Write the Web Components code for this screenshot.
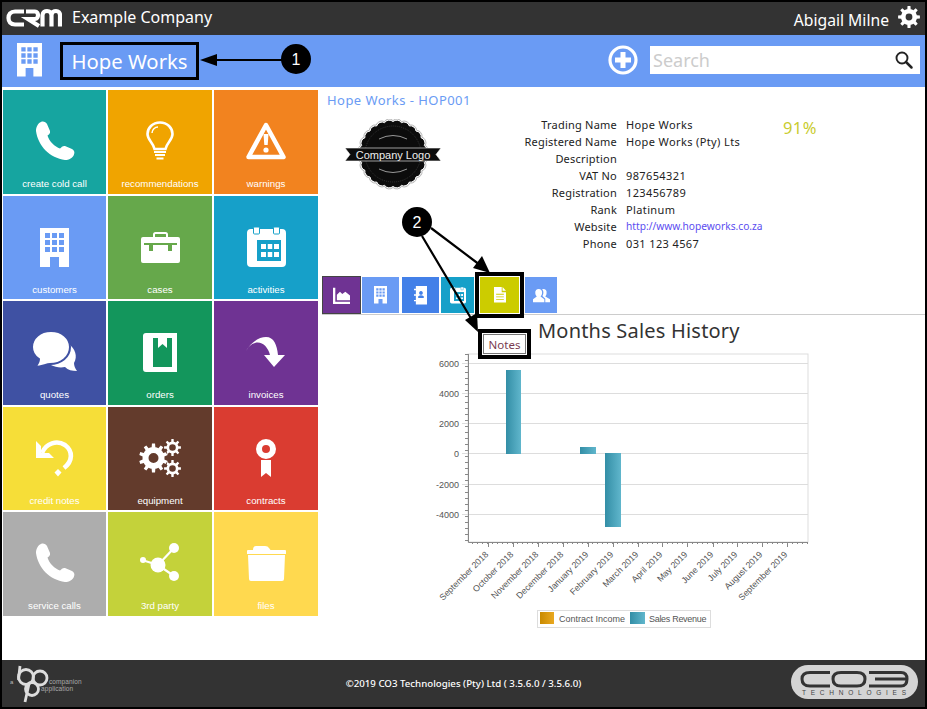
<!DOCTYPE html>
<html lang="en"><head><meta charset="utf-8"><title>CRM</title>
<style>html,body{margin:0;padding:0;background:#fff}body{font-family:"Noto Sans","Liberation Sans",sans-serif}</style>
</head><body>
<crm-app>
  <crm-topbar slot="top" company="Example Company" user="Abigail Milne"></crm-topbar>
  <crm-subbar slot="sub" name="Hope Works"></crm-subbar>
  <crm-tiles slot="tiles">
    <crm-tile c="#16a5a0"><crm-icon slot="icon" name="phone"></crm-icon>create cold call</crm-tile>
    <crm-tile c="#f0a400"><crm-icon slot="icon" name="bulb"></crm-icon>recommendations</crm-tile>
    <crm-tile c="#f2831f"><crm-icon slot="icon" name="warn"></crm-icon>warnings</crm-tile>
    <crm-tile c="#6a9bf4"><crm-icon slot="icon" name="building"></crm-icon>customers</crm-tile>
    <crm-tile c="#66a84b"><crm-icon slot="icon" name="case"></crm-icon>cases</crm-tile>
    <crm-tile c="#16a0c9"><crm-icon slot="icon" name="cal"></crm-icon>activities</crm-tile>
    <crm-tile c="#3f51a3"><crm-icon slot="icon" name="bubbles" style="--c:#3f51a3"></crm-icon>quotes</crm-tile>
    <crm-tile c="#13965c"><crm-icon slot="icon" name="book"></crm-icon>orders</crm-tile>
    <crm-tile c="#6f3393"><crm-icon slot="icon" name="redo"></crm-icon>invoices</crm-tile>
    <crm-tile c="#f6de38"><crm-icon slot="icon" name="undo"></crm-icon>credit notes</crm-tile>
    <crm-tile c="#633b2c"><crm-icon slot="icon" name="gears"></crm-icon>equipment</crm-tile>
    <crm-tile c="#da3c31"><crm-icon slot="icon" name="award"></crm-icon>contracts</crm-tile>
    <crm-tile c="#adadad"><crm-icon slot="icon" name="phone"></crm-icon>service calls</crm-tile>
    <crm-tile c="#c4d23a"><crm-icon slot="icon" name="share"></crm-icon>3rd party</crm-tile>
    <crm-tile c="#ffd94f"><crm-icon slot="icon" name="folder"></crm-icon>files</crm-tile>
  </crm-tiles>
  <crm-panel slot="panel">
    <crm-info>
      <crm-row label="Trading Name">Hope Works</crm-row>
      <crm-row label="Registered Name">Hope Works (Pty) Lts</crm-row>
      <crm-row label="Description"></crm-row>
      <crm-row label="VAT No">987654321</crm-row>
      <crm-row label="Registration">123456789</crm-row>
      <crm-row label="Rank">Platinum</crm-row>
      <crm-row label="Website" link>http://www.hopeworks.co.za</crm-row>
      <crm-row label="Phone">031 123 4567</crm-row>
    </crm-info>
    <crm-tabs>
      <crm-tab c="#6f3393" w="39" h="38"><crm-icon name="area" size="17"></crm-icon></crm-tab>
      <crm-tab c="#6a9bf4" w="37" m="1"><crm-icon name="building" size="13"></crm-icon></crm-tab>
      <crm-tab c="#4380e8" w="37" m="3"><crm-icon name="contacts" size="13"></crm-icon></crm-tab>
      <crm-tab c="#16a0c9" w="33" m="2"><crm-icon name="cal" size="16"></crm-icon></crm-tab>
      <crm-tab c="#cccc00" w="39" m="6" selected><crm-icon name="note" size="12"></crm-icon></crm-tab>
      <crm-tab c="#6a9bf4" w="32" m="6"><crm-icon name="users" size="17"></crm-icon></crm-tab>
    </crm-tabs>
    <crm-chart></crm-chart>
  </crm-panel>
  <crm-footer slot="foot"></crm-footer>
  <crm-callouts slot="over"></crm-callouts>
</crm-app>
<script>
const gear=(cx,cy,R,r,h,n)=>{let d='';const s=Math.PI*2/n;for(let i=0;i<n;i++){const a=i*s-Math.PI/2;
  const p=[[r,a-s*.5],[r,a-s*.27],[R,a-s*.17],[R,a+s*.17],[r,a+s*.27]];
  p.forEach((q,j)=>{d+=(i==0&&j==0?'M':'L')+(cx+q[0]*Math.cos(q[1])).toFixed(2)+' '+(cy+q[0]*Math.sin(q[1])).toFixed(2)});}
  d+=`ZM${cx-h} ${cy}a${h} ${h} 0 1 0 ${2*h} 0a${h} ${h} 0 1 0 ${-2*h} 0Z`;return d};
const scallop=(cx,cy,R,n)=>{let d='';const q=(R*Math.PI/n*1.35).toFixed(1);for(let i=0;i<=n;i++){const a=i/n*Math.PI*2;const x=cx+R*Math.cos(a),y=cy+R*Math.sin(a);
  d+=i==0?`M${x.toFixed(1)} ${y.toFixed(1)}`:`A${q} ${q} 0 0 1 ${x.toFixed(1)} ${y.toFixed(1)}`}return d+'Z'};
const PHONE='M6 1C8 0 11 1 12 3L15 10C15.5 12 14 13.5 12.5 14.5C14 20 20 26 25 27.5C26.5 26 28 24.5 30 25L37 28C39 29 40 31 39 33.5C38 37 34 39 30 39C15 37 3 25 1 10C1 6 3 2 6 1Z';
const win=[5,12,19].flatMap(y=>[5,12,19].map(x=>`M${x} ${y}h5v5h-5z`)).join('');
const ICONS={
 phone:[40,40,`<path fill="#fff" d="${PHONE}"/>`],
 bulb:[28,40,`<path fill="none" stroke="#fff" stroke-width="2.6" d="M14 1.5C6.500 1.500 1.500 7 1.500 13C1.500 19 7 21 8.500 28H19.500C21 21 26.500 19 26.500 13C26.500 7 21.500 1.500 14 1.500Z"/><path fill="none" stroke="#fff" stroke-width="1.500" d="M6 12C6 8.500 9 6 12 6"/><path stroke="#fff" stroke-width="2" d="M8 31H20M9 34H19M10.500 37.500H17.500"/>`],
 warn:[40,40,`<path fill="none" stroke="#fff" stroke-width="4.500" stroke-linejoin="round" d="M20 4L37.500 36H2.500Z"/><path fill="#fff" d="M17.500 13h5l-.8 11h-3.400z"/><circle cx="20" cy="29" r="2.600" fill="#fff"/>`],
 building:[29,39,`<path fill="#fff" fill-rule="evenodd" d="M0 0H29V39H19V29H10V39H0Z${win}"/>`],
 case:[39,31,`<path fill="none" stroke="#fff" stroke-width="2" d="M13 6V2.500Q13 1 14.500 1H24.500Q26 1 26 2.500V6"/><path fill="#fff" fill-rule="evenodd" d="M2 5H37Q39 5 39 7V29Q39 31 37 31H2Q0 31 0 29V7Q0 5 2 5ZM3 11V13H8V19H12V13H27V19H31V13H36V11Z"/>`],
 cal:[39,40,`<path fill="#fff" fill-rule="evenodd" d="M4 2H35Q39 2 39 6V36Q39 40 35 40H4Q0 40 0 36V6Q0 2 4 2ZM10 13V34H34V13ZM14 17h5v5h-5zM20.500 17h5v5h-5zM27 17h5v5h-5zM14 25h5v5h-5zM20.500 25h5v5h-5zM27 25h5v5h-5z"/><rect x="6.500" y="0" width="6" height="7" rx="1" fill="#fff" stroke="var(--tc,#16a0c9)"/><rect x="26.500" y="0" width="6" height="7" rx="1" fill="#fff" stroke="var(--tc,#16a0c9)"/><path d="M10 13H34V34H10ZM14 17v5h5v-5zM20.500 17v5h5v-5zM27 17v5h5v-5zM14 25v5h5v-5zM20.500 25v5h5v-5zM27 25v5h5v-5z" fill="var(--tc,#16a0c9)" fill-rule="evenodd"/>`],
 bubbles:[44,40,`<path fill="#fff" d="M36 12C42 17 45 24 41 31C41 34 42 36 44 39C39 39 35 38 32 35C27 36 22 35 18 33Z"/><path fill="#fff" stroke="var(--c,#3f51a3)" stroke-width="2" d="M18 -1C29 -1 37 6 37 15C37 25 28 32 17 32C13 32 9 35 2 35C5 32 6 30 6 27C1 24 -1 20 -1 15C-1 6 7 -1 18 -1Z"/>`],
 book:[34,39,`<path fill="#fff" fill-rule="evenodd" d="M3 0H34V39H3Q0 39 0 36V3Q0 0 3 0ZM10 5V34H29V5H24V15L19.500 11L15 15V5Z"/>`],
 redo:[40,30,`<path fill="#fff" d="M0 14C6 4 14 0 20 0C28 0 31 8 32 18H39L28 30L18 18H24C22 10 16 4 9 6C5 7 2 10 0 14Z"/>`],
 undo:[39,38,`<path fill="none" stroke="#fff" stroke-width="4.600" d="M7 14C11 4 22 1 30 6C38 12 38 22 29 29"/><path fill="#fff" d="M1 2L6 7V14H14L19 19H1Z"/><path fill="#fff" d="M23 30L26.500 33.500L23 37.500L19.500 33.500Z"/>`],
 gears:[43,38,`<path fill="#fff" fill-rule="evenodd" d="${gear(14.500,19,14.500,11,5,10)}${gear(33.500,8.500,8.500,6,3.300,8)}${gear(33.500,29.500,8.500,6,3.300,8)}"/>`],
 award:[20,38,`<circle cx="10" cy="10" r="7" fill="none" stroke="#fff" stroke-width="6"/><path fill="#fff" d="M5 21H15V38L10 34L5 38Z"/>`],
 share:[40,40,`<path stroke="#fff" stroke-width="2.200" d="M18 22L34 5M18 22L34 33M18 22L2 17"/><circle cx="18" cy="22" r="7.500" fill="#fff"/><circle cx="34" cy="5" r="5" fill="#fff"/><circle cx="34" cy="33" r="5" fill="#fff"/><circle cx="3" cy="17" r="3" fill="#fff"/>`],
 folder:[39,35,`<path fill="#fff" d="M9 0H18Q21 0 22 2L23.500 4H38Q39 4 39 5V8H0V5Q0 4 1 4H6Q6 0 9 0Z"/><path fill="#fff" d="M1 9H38L37 33Q37 35 35 35H4Q2 35 2 33Z"/>`],
 area:[22,22,`<path fill="none" stroke="#fff" stroke-width="3" d="M1.500 1V20.500H22"/><path fill="#fff" d="M5 17V10L9 6L12 9L16 6L22 11V17Z"/>`],
 contacts:[14,20,`<path fill="#fff" fill-rule="evenodd" d="M2 0H14V20H2ZM7.500 5.500a2 2 0 1 0 .01 0ZM4.500 13V11Q7.500 9 10.500 11V13Z"/><path fill="#fff" d="M0 3h3v1.500H0zM0 9h3v1.500H0zM0 15h3v1.500H0z"/>`],
 note:[14,18,`<path fill="#fff" fill-rule="evenodd" d="M0 0H9V6H14V18H0ZM2.500 8V9H11.500V8ZM2.500 11V12H11.500V11ZM2.500 14V15H11.500V14Z"/><path fill="#fff" d="M10 0L14 4.500H10Z"/>`],
 users:[18,15,`<path fill="#fff" d="M6 1a3.600 3.600 0 0 1 3.600 4C9.600 7 8.800 8 8 9L12 12V15H0V12L4 9C3.200 8 2.400 7 2.400 5A3.600 3.600 0 0 1 6 1Z"/><path fill="#fff" d="M11 1a3.400 3.400 0 0 1 3.400 4C14.400 7 13.800 8 13 9L18 12V15H13V11.500L10 8.500C10.500 7.500 11 6 11 5C11 3.500 10.500 2 9.500 1.400Q10.200 1 11 1Z"/>`],
 cog:[22,22,`<path fill="#fff" fill-rule="evenodd" d="${gear(11,11,11,8,3.400,8)}"/>`],
 plus:[30,30,`<circle cx="15" cy="15" r="13" fill="none" stroke="#fff" stroke-width="3.200"/><path stroke="#fff" stroke-width="5" d="M15 7V23M7 15H23"/>`],
 search:[18,18,`<circle cx="7" cy="7" r="5.500" fill="none" stroke="#222" stroke-width="1.900"/><path stroke="#222" stroke-width="2.500" stroke-linecap="round" d="M11 11L16.500 16.500"/>`],
};
class Base extends HTMLElement{
  constructor(){super();this.attachShadow({mode:'open'})}
  connectedCallback(){this.shadowRoot.innerHTML=this.render()}
  a(n,d=''){return this.hasAttribute(n)?this.getAttribute(n):d}
}
const def=(n,r)=>customElements.define(n,class extends Base{render(){return r.call(this)}});

def('crm-icon',function(){const [w,h,b]=ICONS[this.a('name')];const s=this.a('size');const W=s?+s:w,H=s?W*h/w:h;
  return `<style>:host{display:block;line-height:0}svg{display:block;overflow:visible}</style><svg width="${W}" height="${H}" viewBox="0 0 ${w} ${h}">${b}</svg>`});

def('crm-app',()=>`<style>
:host{display:grid;grid-template-columns:minmax(0,1fr);grid-template-rows:33px 52px minmax(0,1fr) 47px;width:923px;height:705px;border:2px solid #000;position:relative;background:#fff;overflow:hidden}
.main{display:flex;min-height:0;min-width:0;padding-top:3px}
</style><slot name="top"></slot><slot name="sub"></slot><div class="main"><slot name="tiles"></slot><slot name="panel"></slot></div><slot name="foot"></slot><slot name="over"></slot>`);

def('crm-topbar',function(){return `<style>
:host{display:flex;align-items:center;background:#333;color:#fff;font:16px "Noto Sans","Liberation Sans",sans-serif}
svg{display:block;margin-left:4px;margin-top:-1px}
.co{margin-left:10px;margin-top:-3px}.us{margin-left:auto;margin-top:3px;margin-right:9px;font-size:15.700px}crm-icon{margin:-4px 5px 0 0}
</style><svg width="56" height="20" viewBox="0 0 56 20" fill="none" stroke="#fff" stroke-width="4.200">
<path d="M18 3.500H9C4.500 3.500 2.500 6.500 2.500 10S4.500 16.500 9 16.500H18"/>
<path d="M20 3.500H29C33 3.500 33 11 29 11H22L33 18"/>
<path d="M36.500 18.500V7C36.500 4 39 3 41 3C44 3 45.500 5 45.500 7V18.500M45.500 7C45.500 4 48 3 50 3C52.500 3 54 5 54 7V18.500"/></svg>
<span class="co">${this.a('company')}</span><span class="us">${this.a('user')}</span><crm-icon name="cog"></crm-icon>`});

def('crm-subbar',function(){return `<style>
:host{display:flex;align-items:center;background:#6a9bf4;color:#fff}
.b{margin:-2px 0 0 15px}
.n{margin-left:18px;border:3px solid #000;box-sizing:border-box;width:139px;height:38px;display:flex;align-items:center;justify-content:center;font:20.300px "Noto Sans","Liberation Sans",sans-serif;margin-top:-1px}
.p{margin:-3px 12px 0 auto}
.s{width:270px;height:28px;margin:-3px 5px 0 0;background:#fff;display:flex;align-items:center;justify-content:space-between;padding:0 7px 0 3px;box-sizing:border-box;color:#ccc;font:18px "Noto Sans","Liberation Sans",sans-serif}
</style><crm-icon class="b" name="building" size="25"></crm-icon><div class="n">${this.a('name')}</div>
<crm-icon class="p" name="plus"></crm-icon><div class="s"><span>Search</span><crm-icon name="search"></crm-icon></div>`});

def('crm-tiles',()=>`<style>:host{display:grid;grid-template-columns:103px 104px 104px;grid-template-rows:104px 103px 104px 103px 104px;gap:2px;margin-left:1px;width:315px;height:max-content;flex:none}</style><slot></slot>`);

def('crm-tile',function(){return `<style>
:host{display:flex;flex-direction:column;align-items:center;background:${this.a('c')};color:#fff;font:9.700px "Liberation Sans",Arial,sans-serif;padding-top:31px;box-sizing:border-box}
.i{height:40px;display:flex;align-items:center;justify-content:center}
.l{margin-top:17px;line-height:12px;white-space:nowrap}
</style><div class="i"><slot name="icon"></slot></div><div class="l"><slot></slot></div>`});

def('crm-panel',()=>`<style>
:host{display:block;flex:1;margin-left:4px;min-width:0;font-family:"Noto Sans","Liberation Sans",sans-serif}
.t{color:#6a9bf4;font-size:13px;letter-spacing:.45px;margin:1px 0 0 5px;line-height:18px;height:24px}
</style><div class="t">Hope Works - HOP001</div><slot></slot>`);

def('crm-info',()=>`<style>
:host{display:flex;height:163px;position:relative;box-sizing:border-box}
.l{margin:4px 0 0 22px;flex:none}
.rows{margin:1px 0 0 -1px;width:400px}
.pc{color:#c9cc2e;font-size:16.500px;letter-spacing:.4px;position:absolute;left:461px;top:1px}
</style><svg class="l" width="98" height="72" viewBox="0 0 98 72">
<path d="${scallop(49,35,32.500,24)}" fill="#0c0c0c" stroke="#fff" stroke-width="1"/><path d="${scallop(49,35,33.500,24)}" fill="none" stroke="#888" stroke-width=".6"/>
<circle cx="49" cy="35" r="28" fill="none" stroke="#555" stroke-width=".5" stroke-dasharray="1 1"/>
<path d="M35 20Q49 13 63 20M35 50Q49 57 63 50" fill="none" stroke="#bbb" stroke-width=".8"/>
<path d="M1 29H97L92 35.500L97 42H1L6 35.500Z" fill="#0c0c0c" stroke="#fff" stroke-width=".6"/>
<text x="49" y="40" text-anchor="middle" fill="#eee" font-size="11" font-family="Liberation Sans,sans-serif">Company Logo</text></svg>
<div class="rows"><slot></slot></div><span class="pc">91%</span>`);

def('crm-row',function(){return `<style>
:host{display:flex;height:17px;line-height:17px;font-size:11px;color:#222;white-space:nowrap}
.k{width:176px;text-align:right;flex:none;letter-spacing:.22px}.v{margin-left:9px;letter-spacing:.38px;${this.hasAttribute('link')?'color:#5b4df0;letter-spacing:0;font-size:10.200px':''}}
</style><div class="k">${this.a('label')}</div><div class="v"><slot></slot></div>`});

def('crm-tabs',()=>`<style>:host{display:flex;align-items:flex-end;height:38px;border-bottom:1px solid #ccc;margin-top:-2px}</style><slot></slot>`);

def('crm-tab',function(){const sel=this.hasAttribute('selected');const h=this.a('h','36');return `<style>
:host{display:flex;align-items:center;justify-content:center;box-sizing:border-box;width:${this.a('w')}px;height:${h}px;margin-left:${this.a('m','0')}px;background:${this.a('c')};--tc:${this.a('c')};margin-bottom:1px;position:relative;flex:none;${sel?'box-shadow:0 0 0 1px #fff,0 0 0 5px #000;':''}${this.a('h')?'border:1px solid #444;margin-bottom:0;':''}}
</style><slot></slot>`});

def('crm-chart',function(){
 const months=['September 2018','October 2018','November 2018','December 2018','January 2019','February 2019','March 2019','April 2019','May 2019','June 2019','July 2019','August 2019','September 2019'];
 const ox=322,oy=344;const X=x=>x-ox,Y=y=>y-oy;
 const ticks=[488,513,538,563,588,613,638,662,687,713,737,762,787];
 let g='';
 [[6000,363],[4000,393],[2000,423],[0,453],[-2000,484],[-4000,514]].forEach(([v,y])=>{
  g+=`<path d="M${X(462)} ${Y(y)+.5}H${X(808)}" stroke="#ddd"/><text x="${X(459)}" y="${Y(y)+3.500}" text-anchor="end">${v}</text>`});
 let minor='';for(let y=354;y<542;y+=6)minor+=`M${X(465)} ${Y(y)+.5}H${X(468)}`;
 let xm='';for(let x=472;x<808;x+=5)xm+=`M${x-ox+.5} ${Y(542)}v2`;
 ticks.forEach((x,i)=>{xm+=`M${x-ox+.5} ${Y(542)}v5`;
  g+=`<text transform="translate(${X(x)+1} ${Y(555)}) rotate(-45)" text-anchor="end" font-size="8.800" style="font-size:8.800px">${months[i]}</text>`});
 const bar=(x,w,y,h)=>`<rect x="${X(x)}" y="${Y(y)}" width="${w}" height="${h}" fill="url(#bg)"/>`;
 return `<style>:host{display:block;position:relative;height:315px}
 h2{margin:0;font:400 20px "Noto Sans","Liberation Sans",sans-serif;color:#333;position:absolute;left:216px;top:1px;letter-spacing:.2px;line-height:30px}
 svg{position:absolute;left:0;top:29px;display:block}text{font-family:"Liberation Sans",Arial,sans-serif;font-size:9px;fill:#555}</style>
 <h2>Months Sales History</h2>
 <svg width="603" height="290" viewBox="0 0 603 290"><defs>
 <linearGradient id="bg"><stop offset="0" stop-color="#338ea6"/><stop offset="1" stop-color="#60b6cc"/></linearGradient>
 <linearGradient id="og"><stop offset="0" stop-color="#c98a00"/><stop offset="1" stop-color="#e9a820"/></linearGradient></defs>
 <rect x="${X(468)}" y="${Y(354)}" width="340" height="188" fill="#fff" stroke="#ddd"/>
 ${g}<path d="${minor}${xm}" stroke="#888" fill="none"/><path d="M${X(468)+.5} ${Y(354)}V${Y(542)+.5}H${X(808)}" stroke="#888" fill="none"/>
 ${bar(506,15,370,84)}${bar(580,16,447,7)}${bar(605,16,453,74)}
 <rect x="${X(537)+.5}" y="${Y(610)+.5}" width="173" height="17" fill="#fff" stroke="#ddd"/>
 <rect x="${X(540)}" y="${Y(612)}" width="14" height="12" fill="url(#og)"/><text x="${X(559)}" y="${Y(622)}">Contract Income</text>
 <rect x="${X(630)}" y="${Y(612)}" width="15" height="12" fill="url(#bg)"/><text x="${X(649)}" y="${Y(622)}" letter-spacing="-.3">Sales Revenue</text>
 </svg>`});

def('crm-footer',()=>`<style>
:host{display:flex;align-items:center;justify-content:space-between;background:#333;color:#fff}
.c{font:500 9.700px "Noto Sans","Liberation Sans",sans-serif;margin:-1px 0 0 38px;white-space:nowrap}
svg{display:block;flex:none}text{font-family:"Liberation Sans",sans-serif}
</style>
<svg width="90" height="47" viewBox="0 0 90 47" style="margin-left:6px">
<g fill="none" stroke="#ddd" stroke-width="2.800"><circle cx="18" cy="17" r="7.500"/><circle cx="32" cy="18" r="7"/><circle cx="24" cy="29" r="6.500"/></g>
<path stroke="#ddd" stroke-width="2.800" d="M12 6L10.500 20M21 24L17 42"/>
<text x="2" y="24" font-size="6" fill="#bbb">a</text><text x="41" y="24" font-size="6.500" fill="#aaa" letter-spacing=".1">companion</text><text x="33" y="31" font-size="6.500" fill="#aaa" letter-spacing=".1">application</text></svg>
<div class="c">©2019 CO3 Technologies (Pty) Ltd ( 3.5.6.0 / 3.5.6.0)</div>
<svg width="128" height="35" viewBox="0 0 128 35" style="margin:-2px 6px 0 0">
<rect x="0" y="0" width="127" height="34" rx="17" fill="#d4d4d4"/>
<g fill="none" stroke="#333" stroke-width="3"><path d="M39 7.500H19Q11 7.500 11 14Q11 21 19 21H39"/><path d="M50 7.500H66Q74 7.500 74 14Q74 21 66 21H50Q42 21 42 14Q42 7.500 50 7.500Z"/><path d="M78 7.500H110Q116 7.500 116 14Q116 21 110 21H78M84 14H116"/></g>
<text x="11" y="30" font-size="6.500" fill="#444" textLength="104" lengthAdjust="spacing">TECHNOLOGIES</text></svg>`);

def('crm-callouts',()=>`<style>
:host{position:absolute;left:-2px;top:-2px;width:927px;height:709px;pointer-events:none;font-family:"Liberation Sans",sans-serif}
svg{position:absolute;left:0;top:0}
.tip{position:absolute;left:478px;top:329px;width:53px;height:30px;box-sizing:border-box;border:4px solid #000;background:#fff;padding:1px}
.tip div{border:1px solid #777;height:100%;box-sizing:border-box;display:flex;align-items:center;justify-content:center;color:#7a3b50;font:11.500px "Noto Sans","Liberation Sans",sans-serif}
text{font:16px "Liberation Sans",sans-serif;fill:#fff}
</style><div class="tip"><div>Notes</div></div>
<svg width="927" height="709" viewBox="0 0 927 709">
<path d="M214 60H283" stroke="#000" stroke-width="2"/><path d="M200 60L217 54V66Z" fill="#000"/>
<circle cx="296" cy="59" r="15" fill="#000"/><text x="296" y="65" text-anchor="middle">1</text>
<path d="M431 228L480 265M422 236L472 320" stroke="#000" stroke-width="2.200"/>
<path d="M490 273L473 268L482 256Z" fill="#000"/><path d="M478 332L465 320L477 313Z" fill="#000"/>
<circle cx="417" cy="222" r="15" fill="#000"/><text x="417" y="228" text-anchor="middle">2</text>
</svg>`);
</script>
</body></html>
